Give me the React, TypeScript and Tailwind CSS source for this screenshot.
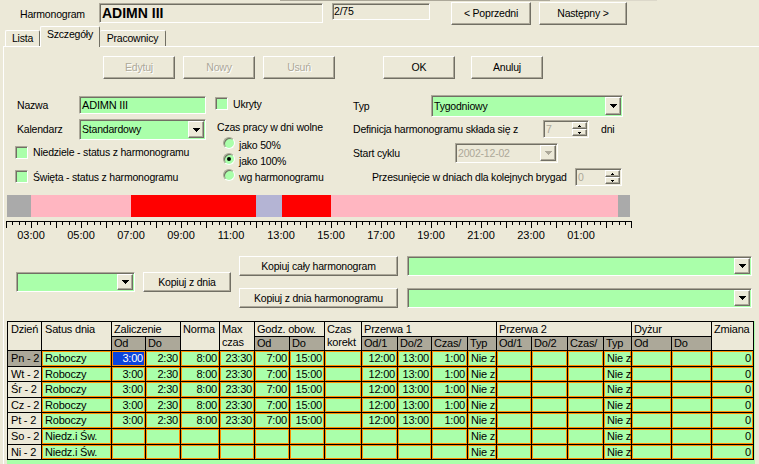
import React from "react";

const sunken =
  "border border-t-[#aca899] border-l-[#aca899] border-r-white border-b-white shadow-[inset_1px_1px_0_#716f64]";
const raised =
  "border border-t-white border-l-white border-r-[#716f64] border-b-[#716f64] shadow-[inset_-1px_-1px_0_#aca899] bg-[#ece9d8]";

function Tri({ color = "#000" }: { color?: string }) {
  return (
    <svg width="7" height="4" viewBox="0 0 7 4" shapeRendering="crispEdges">
      <rect x="0" y="0" width="7" height="1" fill={color} />
      <rect x="1" y="1" width="5" height="1" fill={color} />
      <rect x="2" y="2" width="3" height="1" fill={color} />
      <rect x="3" y="3" width="1" height="1" fill={color} />
    </svg>
  );
}

function DropBtn({ color }: { color?: string }) {
  return (
    <div className={`w-[16px] flex items-center justify-center ${raised}`}>
      <Tri color={color} />
    </div>
  );
}

function Combo({ className = "", text = "" }: { className?: string; text?: string }) {
  return (
    <div className={`${sunken} bg-[#aaffaa] flex items-stretch p-[1px] ${className}`}>
      <div className="flex-1 flex items-center pl-[1px] overflow-hidden">{text}</div>
      <DropBtn />
    </div>
  );
}

function Spin({ className = "", text = "" }: { className?: string; text?: string }) {
  return (
    <div className={`${sunken} bg-[#ece9d8] flex items-stretch p-[1px] ${className}`}>
      <div className="flex-1 flex items-center pl-[1px] text-[#aca899]">{text}</div>
      <div className="w-[15px] flex flex-col">
        <div className={`flex-1 flex items-center justify-center ${raised}`}>
          <svg width="3" height="2" viewBox="0 0 3 2" shapeRendering="crispEdges">
            <rect x="1" y="0" width="1" height="1" fill="#000" />
            <rect x="0" y="1" width="3" height="1" fill="#000" />
          </svg>
        </div>
        <div className={`flex-1 flex items-center justify-center ${raised}`}>
          <svg width="3" height="2" viewBox="0 0 3 2" shapeRendering="crispEdges">
            <rect x="0" y="0" width="3" height="1" fill="#000" />
            <rect x="1" y="1" width="1" height="1" fill="#000" />
          </svg>
        </div>
      </div>
    </div>
  );
}

function Check() {
  return <div className={`w-[13px] h-[13px] bg-[#aaffaa] ${sunken}`} />;
}

function Radio({ on }: { on?: boolean }) {
  return (
    <div className="w-[12px] h-[12px] rounded-full bg-[#aaffaa] border border-t-[#aca899] border-l-[#aca899] border-r-white border-b-white shadow-[inset_1px_1px_0_#716f64] flex items-center justify-center">
      {on && <div className="w-[4px] h-[4px] rounded-full bg-black" />}
    </div>
  );
}

function Btn({
  className = "",
  children,
  disabled,
}: {
  className?: string;
  children: React.ReactNode;
  disabled?: boolean;
}) {
  return (
    <div
      className={`${raised} flex items-center justify-center ${
        disabled ? "text-[#aca899] [text-shadow:1px_1px_0_#ffffff]" : ""
      } ${className}`}
    >
      {children}
    </div>
  );
}

const days = ["Pn - 2", "Wt - 2", "Śr - 2", "Cz - 2", "Pt - 2", "So - 2", "Ni - 2"];
const work = [
  "Roboczy", "3:00", "2:30", "8:00", "23:30", "7:00", "15:00", "", "12:00", "13:00", "1:00", "Nie z",
  "", "", "", "Nie z", "", "", "0",
];
const free = [
  "Niedz.i Św.", "", "", "", "", "", "", "", "", "", "", "Nie z", "", "", "", "Nie z", "", "", "0",
];
const leftCols = new Set([0, 11, 15]);

const hdr = "bg-[#ece9d8] border-r border-b border-black pl-[2px] pt-[1px] overflow-hidden";
const sub = "bg-[#aca899] border-r border-b border-black pl-[2px] flex items-center overflow-hidden";
const cellBase =
  "border-r border-b border-black shadow-[inset_0_0_0_1px_#ff8c00] flex items-center overflow-hidden";

function Grid() {
  return (
    <div className="ml-[3px] w-[748px] h-[143px] bg-[#aaffaa] overflow-hidden">
      <div className="grid w-fit grid-cols-[34px_70px_34px_35px_39px_35px_35px_35px_37px_36px_34px_36px_29px_35px_36px_36px_28px_40px_40px_42px] grid-rows-[15px_14px_16px_15px_16px_15px_16px_16px_15px] border-t border-l border-black text-[11px] tracking-[-0.2px] leading-[13px]">
        <div className={`${hdr} row-span-2 pl-[3px]`}>Dzień</div>
        <div className={`${hdr} row-span-2 pl-[3px]`}>Satus dnia</div>
        <div className={`${hdr} col-span-2`}>Zaliczenie</div>
        <div className={`${hdr} row-span-2`}>Norma</div>
        <div className={`${hdr} row-span-2`}>
          Max
          <br />
          czas
        </div>
        <div className={`${hdr} col-span-2`}>Godz. obow.</div>
        <div className={`${hdr} row-span-2`}>
          Czas
          <br />
          korekt
        </div>
        <div className={`${hdr} col-span-4`}>Przerwa 1</div>
        <div className={`${hdr} col-span-4`}>Przerwa 2</div>
        <div className={`${hdr} col-span-2`}>Dyżur</div>
        <div className={`${hdr} row-span-2`}>Zmiana</div>

        <div className={sub}>Od</div>
        <div className={sub}>Do</div>
        <div className={sub}>Od</div>
        <div className={sub}>Do</div>
        <div className={sub}>Od/1</div>
        <div className={sub}>Do/2</div>
        <div className={sub}>Czas/</div>
        <div className={sub}>Typ</div>
        <div className={sub}>Od/1</div>
        <div className={sub}>Do/2</div>
        <div className={sub}>Czas/</div>
        <div className={sub}>Typ</div>
        <div className={sub}>Od</div>
        <div className={sub}>Do</div>

        {days.map((d, r) => {
          const vals = r < 5 ? work : free;
          return (
            <React.Fragment key={d}>
              <div
                className={`border-r border-b border-black flex items-center pl-[3px] ${
                  r === 0 ? "bg-[#aca899]" : "bg-[#ece9d8]"
                }`}
              >
                {d}
              </div>
              {vals.map((v, c) => {
                const sel = r === 0 && c === 1;
                return (
                  <div
                    key={c}
                    className={`${cellBase} ${
                      leftCols.has(c) ? "justify-start pl-[3px]" : "justify-end pr-[2px]"
                    } ${sel ? "bg-[#0b44dc] text-white" : "bg-[#aaffaa]"}`}
                  >
                    {v}
                  </div>
                );
              })}
            </React.Fragment>
          );
        })}
      </div>
    </div>
  );
}

function Timeline() {
  const ticks = Array.from({ length: 101 }, (_, k) => k);
  const labels = ["03:00", "05:00", "07:00", "09:00", "11:00", "13:00", "15:00", "17:00", "19:00", "21:00", "23:00", "01:00"];
  return (
    <div className="mt-[8px] ml-[2px] w-[626px]">
      <div className="flex h-[22px] pl-[1px]">
        <div className="w-[24px] bg-[#aaaaaa]" />
        <div className="w-[100px] bg-[#ffb6c1]" />
        <div className="w-[125px] bg-[#ff0000]" />
        <div className="w-[26px] bg-[#b4b4d4]" />
        <div className="w-[49px] bg-[#ff0000]" />
        <div className="w-[287px] bg-[#ffb6c1]" />
        <div className="w-[12px] bg-[#aaaaaa]" />
      </div>
      <svg className="mt-[4px] block" width="626" height="8" shapeRendering="crispEdges">
        <rect x="0" y="0" width="626" height="1" fill="#000" />
        {ticks.map((k) => (
          <rect
            key={k}
            x={Math.round(6.25 * k)}
            y="0"
            width="1"
            height={k % 4 === 0 ? 7 : 4}
            fill="#000"
          />
        ))}
      </svg>
      <div className="relative h-[16px] text-[11px] tracking-normal">
        {labels.map((l, i) => (
          <span key={l} className="absolute top-0 -translate-x-1/2" style={{ left: 25 + 50 * i }}>
            {l}
          </span>
        ))}
      </div>
    </div>
  );
}

export default function App() {
  return (
    <div className="w-[759px] h-[464px] bg-[#ece9d8] overflow-hidden font-['Liberation_Sans',Arial,sans-serif] text-[10.5px] tracking-[-0.2px] leading-[13px] text-black whitespace-nowrap">
      <div className="flex h-[1px]">
        <div className="ml-[280px] w-[270px] bg-[#aca899]" />
        <div className="w-[107px] bg-[#dcd8ca]" />
      </div>
      <div className="flex h-[25px] items-start">
        <div className="w-[99px] pl-[20px] pt-[7px]">Harmonogram</div>
        <div className={`${sunken} w-[224px] h-[20px] mt-[2px] flex items-center pl-[2px] font-bold text-[14px] tracking-normal`}>
          ADIMN III
        </div>
        <div className={`${sunken} w-[98px] h-[17px] mt-[2px] ml-[9px] flex items-center pl-[1px]`}>2/75</div>
        <Btn className="w-[80px] h-[23px] mt-[1px] ml-[21px]">&lt; Poprzedni</Btn>
        <Btn className="w-[88px] h-[23px] mt-[1px] ml-[8px]">Następny &gt;</Btn>
      </div>

      <div className="flex items-end h-[20px] pl-[5px]">
        <div className="w-[35px] h-[16px] border-t border-l border-r border-t-white border-l-white border-r-[#716f64] rounded-t-[2px] flex items-center justify-center">
          Lista
        </div>
        <div className="w-[60px] h-[21px] -mb-[1px] relative z-10 bg-[#ece9d8] border-t border-l border-r border-t-white border-l-white border-r-[#716f64] rounded-t-[2px] flex items-start justify-center pt-[1px]">
          Szczegóły
        </div>
        <div className="w-[66px] h-[16px] border-t border-r border-t-white border-r-[#716f64] rounded-t-[2px] flex items-center justify-center">
          Pracownicy
        </div>
      </div>

      <div className="ml-[3px] h-[418px] border-t border-l border-t-white border-l-white">
        <div className="flex mt-[9px] ml-[99px] h-[23px]">
          <Btn disabled className="w-[72px] h-[23px]">Edytuj</Btn>
          <Btn disabled className="w-[72px] h-[23px] ml-[8px]">Nowy</Btn>
          <Btn disabled className="w-[72px] h-[23px] ml-[8px]">Usuń</Btn>
          <Btn className="w-[72px] h-[23px] ml-[48px]">OK</Btn>
          <Btn className="w-[72px] h-[23px] ml-[16px]">Anuluj</Btn>
        </div>

        <div className="flex mt-[16px] h-[92px] ml-[12px]">
          <div className="w-[199px] flex flex-col">
            <div className="flex items-center mt-[1px] h-[18px]">
              <div className="w-[63px] pl-[1px]">Nazwa</div>
              <div className={`${sunken} bg-[#aaffaa] w-[127px] h-[18px] flex items-center pl-[2px] text-[11px]`}>
                ADIMN III
              </div>
            </div>
            <div className="flex items-center mt-[5px] h-[21px]">
              <div className="w-[63px] pl-[1px]">Kalendarz</div>
              <Combo className="w-[127px] h-[21px]" text="Standardowy" />
            </div>
            <div className="flex items-center mt-[6px] h-[13px] -ml-[1px]">
              <Check />
              <span className="ml-[5px]">Niedziele - status z harmonogramu</span>
            </div>
            <div className="flex items-center mt-[11px] h-[13px] -ml-[1px]">
              <Check />
              <span className="ml-[5px] pt-[1px]">Święta - status z harmonogramu</span>
            </div>
          </div>

          <div className="w-[138px] flex flex-col">
            <div className="flex items-center mt-[2px] h-[13px]">
              <Check />
              <span className="ml-[5px] pt-[2px]">Ukryty</span>
            </div>
            <div className="mt-[11px] pl-[2px]">Czas pracy w dni wolne</div>
            <div className="mt-[3px] flex flex-col">
              <div className="flex items-start h-[16px]">
                <div className="ml-[8px]">
                  <Radio />
                </div>
                <span className="ml-[4px] mt-[2px]">jako 50%</span>
              </div>
              <div className="flex items-start h-[16px]">
                <div className="ml-[8px]">
                  <Radio on />
                </div>
                <span className="ml-[4px] mt-[2px]">jako 100%</span>
              </div>
              <div className="flex items-start h-[16px]">
                <div className="ml-[8px]">
                  <Radio />
                </div>
                <span className="ml-[4px] mt-[2px]">wg harmonogramu</span>
              </div>
            </div>
          </div>

          <div className="flex flex-col">
            <div className="flex items-center h-[22px]">
              <div className="w-[78px]">Typ</div>
              <Combo className="w-[192px] h-[22px]" text="Tygodniowy" />
            </div>
            <div className="flex items-center h-[18px] mt-[3px]">
              <div className="w-[190px]">Definicja harmonogramu składa się z</div>
              <Spin className="w-[46px] h-[18px]" text="7" />
              <div className="ml-[12px]">dni</div>
            </div>
            <div className="flex items-center h-[20px] mt-[5px]">
              <div className="w-[102px]">Start cyklu</div>
              <div className={`${sunken} bg-[#ece9d8] flex items-stretch p-[1px] w-[103px] h-[20px]`}>
                <div className="flex-1 flex items-center pl-[1px] text-[#aca899]">2002-12-02</div>
                <DropBtn color="#aca899" />
              </div>
            </div>
            <div className="flex items-center h-[18px] mt-[5px]">
              <div className="w-[222px] pl-[19px]">Przesunięcie w dniach dla kolejnych brygad</div>
              <Spin className="w-[47px] h-[18px]" text="0" />
            </div>
          </div>
        </div>

        <Timeline />

        <div className="flex items-center ml-[12px] mt-[11px] h-[52px]">
          <Combo className="w-[119px] h-[20px]" />
          <Btn className="w-[88px] h-[20px] ml-[8px]">Kopiuj z dnia</Btn>
          <div className="flex flex-col ml-[8px] gap-[12px]">
            <div className="flex">
              <Btn className="w-[159px] h-[20px]">Kopiuj cały harmonogram</Btn>
              <Combo className="w-[345px] h-[20px] ml-[9px]" />
            </div>
            <div className="flex">
              <Btn className="w-[159px] h-[20px]">Kopiuj z dnia harmonogramu</Btn>
              <Combo className="w-[345px] h-[20px] ml-[9px]" />
            </div>
          </div>
        </div>

        <div className="mt-[13px]">
          <Grid />
        </div>
      </div>
    </div>
  );
}
